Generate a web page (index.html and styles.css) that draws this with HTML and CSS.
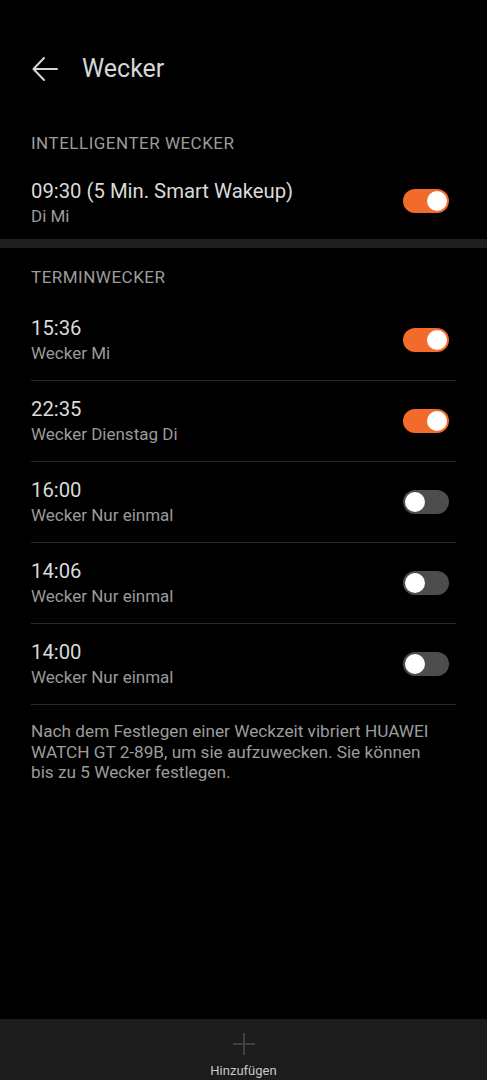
FILE: index.html
```html
<!DOCTYPE html>
<html>
<head>
<title>Wecker</title>
<link rel="stylesheet" href="styles.css">
</head>
<body>

<div class="page">
    <div class="titlebar">
        <svg class="back" width="28" height="28" viewBox="0 0 28 28">
            <path d="M26 14 H3 M13 3 L2.5 14 L13 25" fill="none" stroke="#d6d6d6" stroke-width="2" stroke-linecap="round" stroke-linejoin="round"/>
        </svg>
        <h1>Wecker</h1>
    </div>

    <div class="section-head first">INTELLIGENTER WECKER</div>
    <div class="row smart">
        <div class="text">
            <div class="time">09:30 (5 Min. Smart Wakeup)</div>
            <div class="sub">Di Mi</div>
        </div>
        <div class="switch on"><span class="knob"></span></div>
    </div>

    <div class="gap"></div>

    <div class="section-head">TERMINWECKER</div>
    <div class="list">
        <div class="row lined">
            <div class="text">
                <div class="time">15:36</div>
                <div class="sub">Wecker Mi</div>
            </div>
            <div class="switch on"><span class="knob"></span></div>
        </div>
        <div class="row lined">
            <div class="text">
                <div class="time">22:35</div>
                <div class="sub">Wecker Dienstag Di</div>
            </div>
            <div class="switch on"><span class="knob"></span></div>
        </div>
        <div class="row lined">
            <div class="text">
                <div class="time">16:00</div>
                <div class="sub">Wecker Nur einmal</div>
            </div>
            <div class="switch"><span class="knob"></span></div>
        </div>
        <div class="row lined">
            <div class="text">
                <div class="time">14:06</div>
                <div class="sub">Wecker Nur einmal</div>
            </div>
            <div class="switch"><span class="knob"></span></div>
        </div>
        <div class="row lined">
            <div class="text">
                <div class="time">14:00</div>
                <div class="sub">Wecker Nur einmal</div>
            </div>
            <div class="switch"><span class="knob"></span></div>
        </div>
    </div>

    <p class="note">Nach dem Festlegen einer Weckzeit vibriert HUAWEI WATCH GT 2-89B, um sie aufzuwecken. Sie können bis zu 5 Wecker festlegen.</p>
</div>

<div class="bottombar">
    <svg width="24" height="24" viewBox="0 0 24 24">
        <path d="M12 1 V23 M1 12 H23" stroke="#4a4a4a" stroke-width="1.6"/>
    </svg>
    <span>Hinzufügen</span>
</div>

</body>
</html>
```

FILE: styles.css
```css
body {
    margin: 0;
    background-color: #000;
    font-family: Roboto, "Noto Sans", sans-serif;
    color: #dadada;
}
.page {
    height: 1019px;
}
.titlebar {
    height: 110px;
    display: flex;
    align-items: flex-end;
    padding: 0 31px 27px;
    box-sizing: border-box;
}
.back {
    margin-right: 23px;
}
h1 {
    margin: 0;
    font-size: 25px;
    line-height: 28px;
    font-weight: 400;
    color: #d6d6d6;
}
.section-head {
    padding: 19px 31px 11px;
    font-size: 17px;
    line-height: 20px;
    letter-spacing: 0.5px;
    color: #9c9c9c;
}
.section-head.first {
    padding-top: 23px;
    padding-bottom: 10px;
}
.list .row:first-child {
    margin-top: 2px;
}
.row {
    height: 81px;
    margin: 0 31px;
    display: flex;
    align-items: center;
    justify-content: space-between;
    box-sizing: border-box;
}
.row.smart {
    height: 76px;
}
.row.smart .text {
    padding-top: 3px;
}
.row.lined {
    border-bottom: 1px solid #2a2a2a;
}
.time {
    font-size: 20.3px;
    line-height: 25px;
    color: #dadada;
}
.sub {
    font-size: 17px;
    line-height: 21px;
    margin-top: 2px;
    color: #9a9a9a;
}
.switch {
    width: 46px;
    height: 24px;
    border-radius: 12px;
    background-color: #4d4d4d;
    margin-right: 7px;
    padding: 2px;
    box-sizing: border-box;
    display: flex;
}
.switch.on {
    background-color: #f26b2a;
    justify-content: flex-end;
}
.knob {
    width: 20px;
    height: 20px;
    border-radius: 50%;
    background-color: #fff;
}
.gap {
    height: 9px;
    background-color: #1e1e1e;
}
.note {
    margin: 16px 41px 0 31px;
    font-size: 17.2px;
    line-height: 20.5px;
    color: #9c9c9c;
}
.bottombar {
    height: 61px;
    background-color: #1c1c1c;
    display: flex;
    flex-direction: column;
    align-items: center;
    padding-top: 13px;
    box-sizing: border-box;
}
.bottombar span {
    font-size: 13px;
    margin-top: 7px;
    color: #c8c8c8;
}
```
